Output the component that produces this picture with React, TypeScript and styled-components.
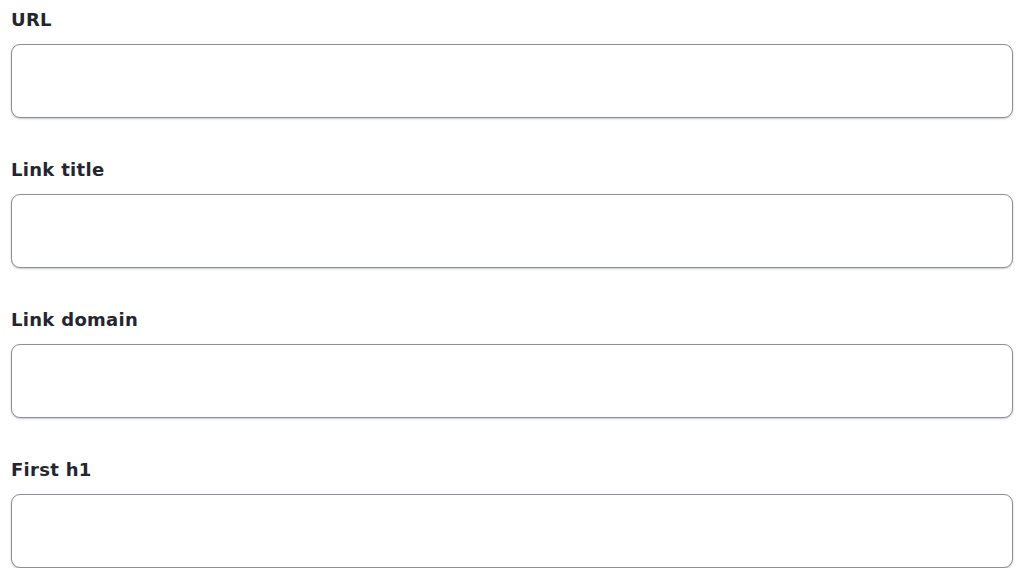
import React from "react";
import styled, { createGlobalStyle } from "styled-components";

const Global = createGlobalStyle`
  html, body { margin: 0; padding: 0; background: #ffffff; }
  body { font-family: "DejaVu Sans", "Noto Sans", sans-serif; }
  * { box-sizing: border-box; }
`;

const Form = styled.form`
  display: flex;
  flex-direction: column;
  gap: 40px;
  padding: 8px 11px 0 11px;
`;

const Field = styled.div`
  display: flex;
  flex-direction: column;
  gap: 12px;
`;

const Label = styled.label`
  display: block;
  font-family: "DejaVu Sans", "Noto Sans", sans-serif;
  font-weight: 700;
  font-size: 18px;
  letter-spacing: 0.3px;
  line-height: 24px;
  color: #25252f;
`;

const Input = styled.input`
  display: block;
  width: 100%;
  height: 74px;
  border: 1px solid #8c8e98;
  border-radius: 9px;
  background: #ffffff;
  box-shadow: 0 1px 2px rgba(40, 42, 54, 0.25);
  padding: 0 16px;
  font-size: 16px;
  font-family: "Noto Sans", sans-serif;
  outline: none;
`;

const fields = [
  { id: "url", label: "URL" },
  { id: "title", label: "Link title" },
  { id: "domain", label: "Link domain" },
  { id: "h1", label: "First h1" },
];

export default function App() {
  return (
    <>
      <Global />
      <Form>
        {fields.map((f) => (
          <Field key={f.id}>
            <Label htmlFor={f.id}>{f.label}</Label>
            <Input id={f.id} type="text" />
          </Field>
        ))}
      </Form>
    </>
  );
}
